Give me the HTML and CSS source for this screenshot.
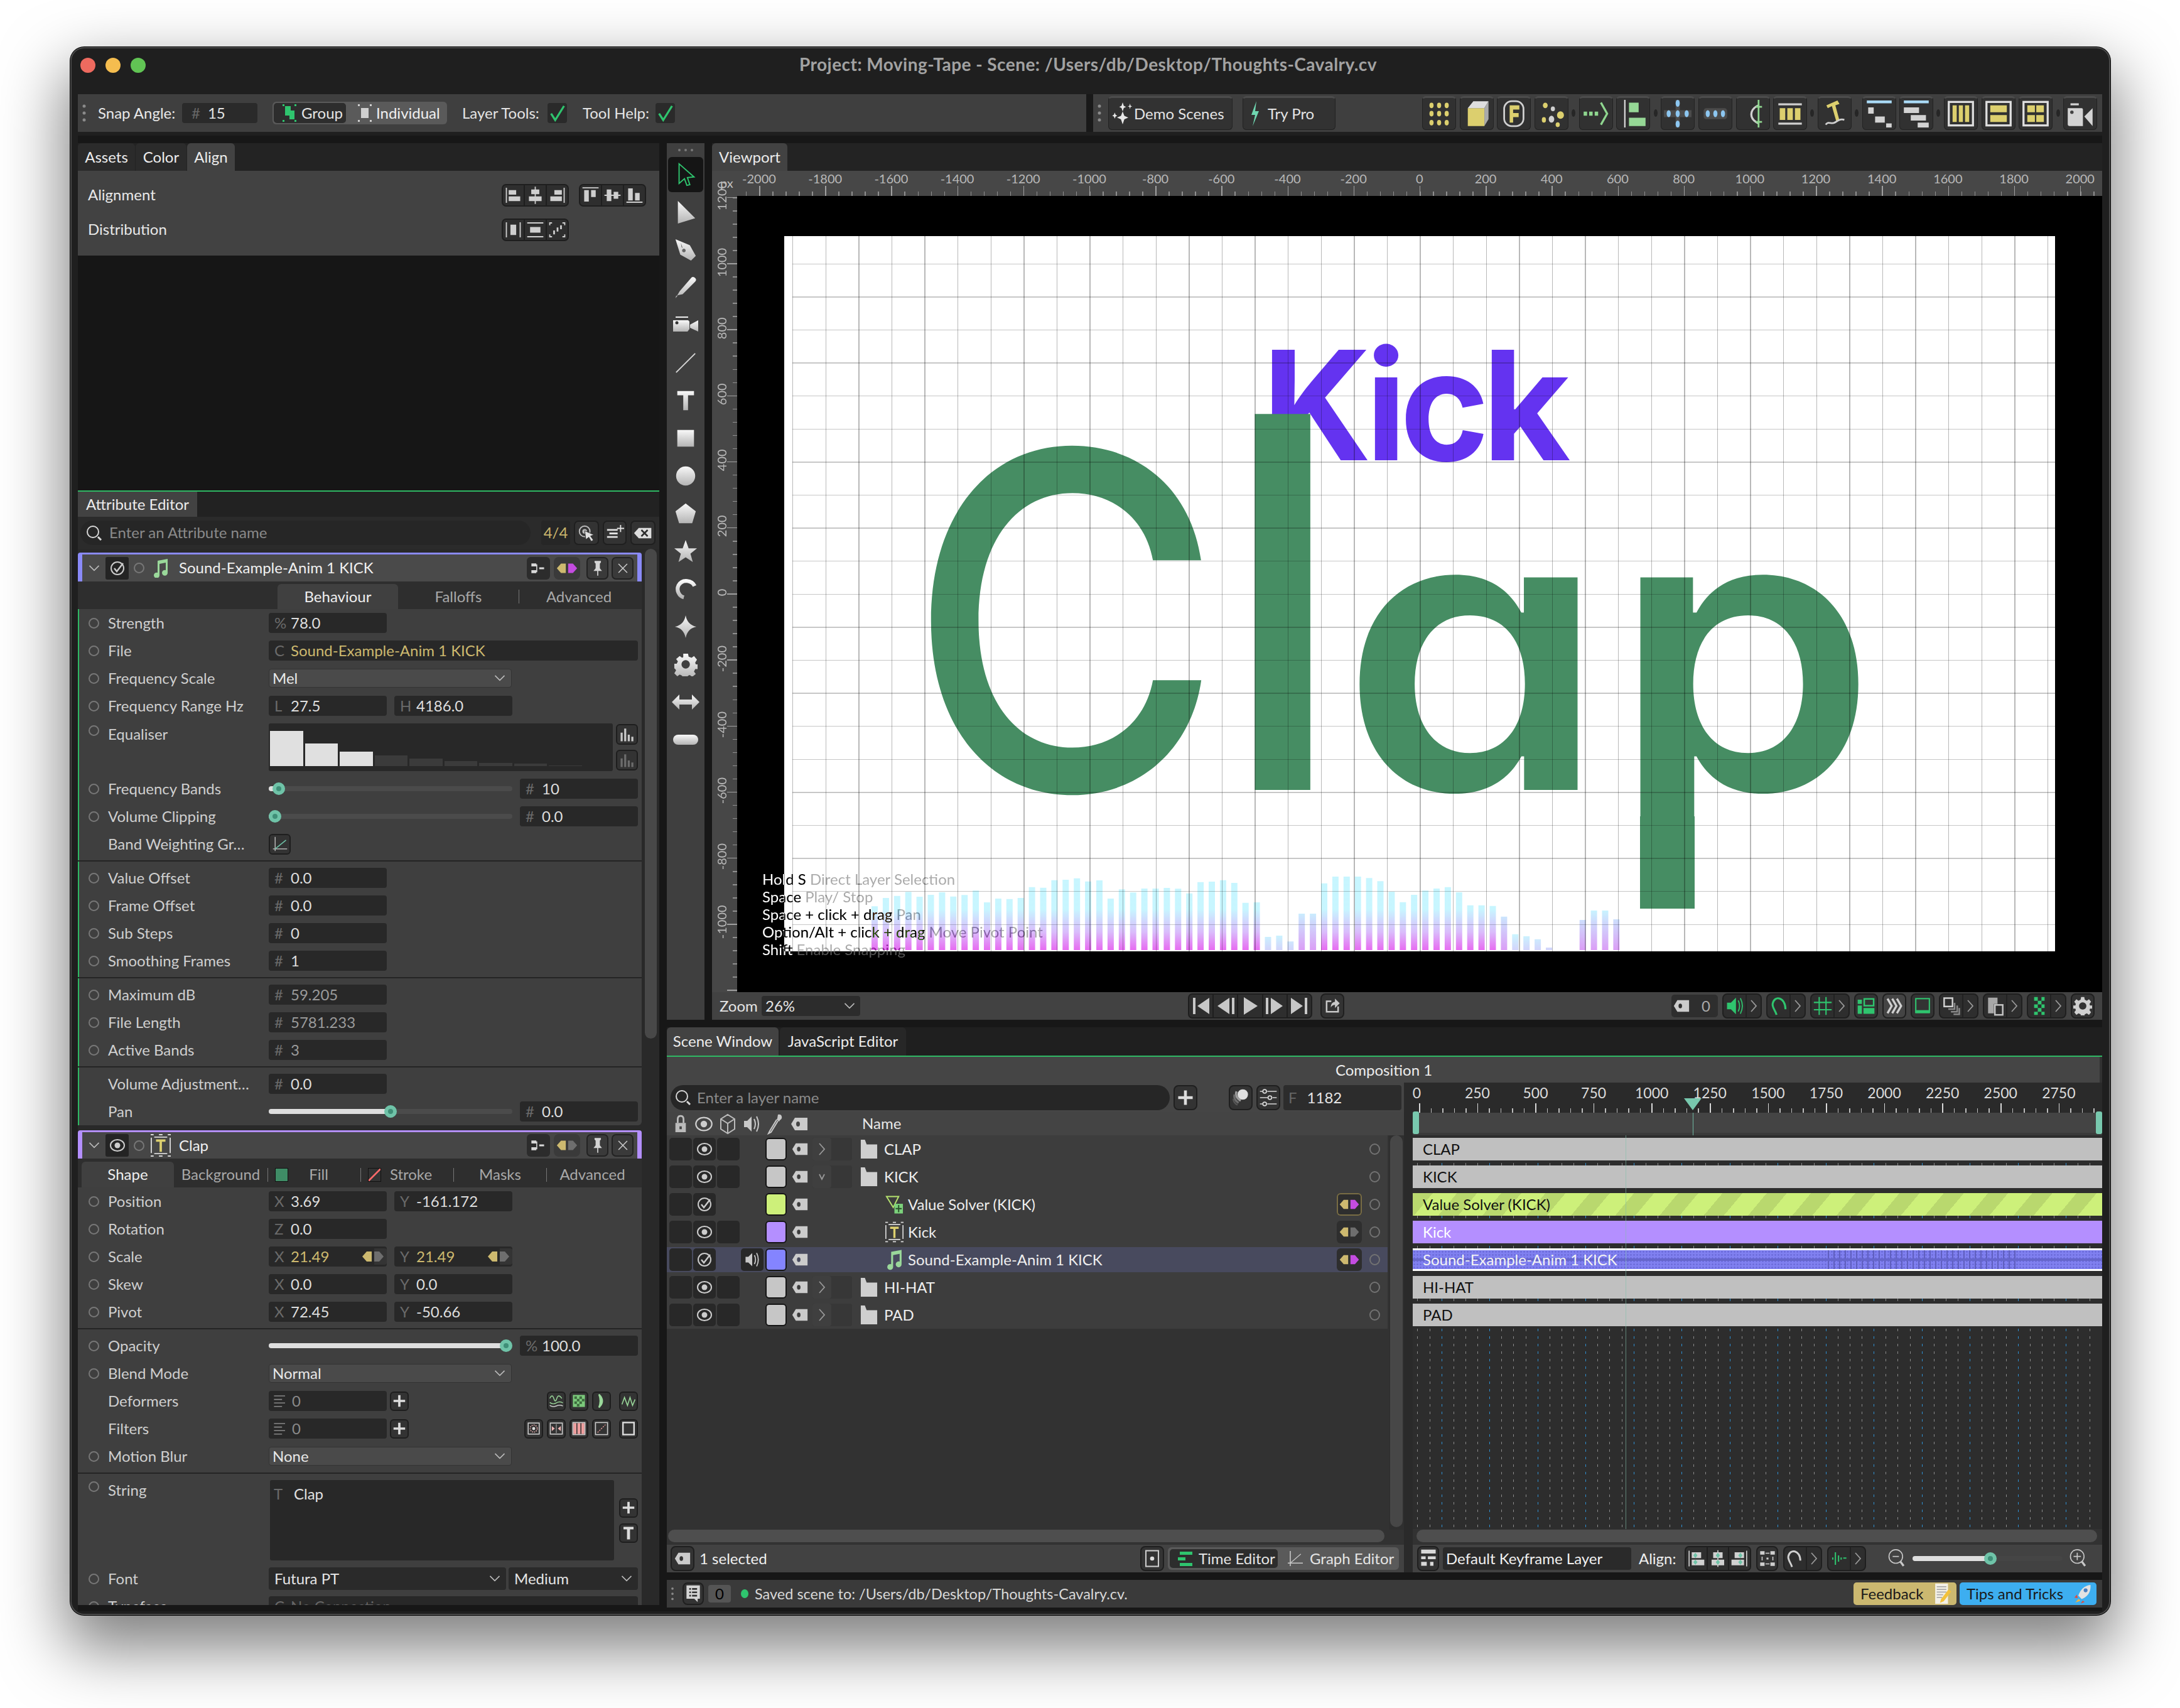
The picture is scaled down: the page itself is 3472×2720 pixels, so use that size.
FILE: index.html
```html
<!DOCTYPE html>
<html lang="en">
<head>
<meta charset="utf-8">
<title>Cavalry</title>
<link rel="stylesheet" href="styles.css">
</head>
<body>
<svg class="sprite" width="0" height="0" aria-hidden="true">
<defs>
<linearGradient id="gw" x1="0" y1="0" x2="0" y2="1"><stop offset="0" stop-color="#f8f8f8"/><stop offset="1" stop-color="#b4b4b4"/></linearGradient>
<symbol id="i-dots" viewBox="0 0 40 40"><g fill="#dccf6e"><ellipse cx="9" cy="8" rx="3" ry="4"/><ellipse cx="20" cy="8" rx="3" ry="4"/><ellipse cx="31" cy="8" rx="3" ry="4"/><ellipse cx="9" cy="20" rx="3" ry="4"/><ellipse cx="20" cy="20" rx="3" ry="4"/><ellipse cx="31" cy="20" rx="3" ry="4"/><ellipse cx="9" cy="33" rx="3" ry="4"/><ellipse cx="20" cy="33" rx="3" ry="4"/><ellipse cx="31" cy="33" rx="3" ry="4"/></g></symbol>
<symbol id="i-box" viewBox="0 0 40 40"><path fill="#dccf6e" d="M7 12h24v26H7z"/><path fill="#dedede" d="M7 12l8-10h22l-6 10z"/><path fill="#aaa" d="M31 12l6-10v26l-6 10z"/></symbol>
<symbol id="i-f" viewBox="0 0 40 40"><rect x="6" y="2" width="28" height="36" rx="11" fill="none" stroke="#cfcfcf" stroke-width="2.5"/><path fill="#dccf6e" d="M14 8h14v6h-9v5h8v6h-8v8h-5z"/></symbol>
<symbol id="i-scatter" viewBox="0 0 40 40"><g><ellipse cx="11" cy="8" rx="3.5" ry="4" fill="#dccf6e"/><ellipse cx="22" cy="13" rx="3" ry="3.5" fill="#cfcfcf"/><ellipse cx="33" cy="22" rx="5" ry="5.5" fill="#dccf6e"/><ellipse cx="20" cy="28" rx="4" ry="5" fill="#cfcfcf"/><ellipse cx="9" cy="29" rx="3" ry="4" fill="#dccf6e"/><ellipse cx="29" cy="36" rx="3" ry="3.5" fill="#dccf6e"/></g></symbol>
<symbol id="i-arrow" viewBox="0 0 40 40"><path fill="#8fd68f" d="M2 17h5v6H2zm8 0h5v6h-5zm8 0h5v6h-5z"/><path fill="none" stroke="#8fd68f" stroke-width="3" d="M27 4l9 16-9 16"/></symbol>
<symbol id="i-alignv" viewBox="0 0 40 40"><path fill="#ddd" d="M7 0h2v40H7z"/><path fill="#96d896" d="M14 6h14v14H14zM14 28h24v12H14z" transform="translate(0 -2)"/></symbol>
<symbol id="i-cross" viewBox="0 0 40 40"><path fill="#4b4b4b" d="M17 0h6v15h17v10H23v15h-6V25H0V15h17z"/><g fill="#8cc6f0"><ellipse cx="20" cy="5" rx="3" ry="5"/><ellipse cx="20" cy="35" rx="3" ry="5"/><ellipse cx="7" cy="20" rx="3" ry="5"/><ellipse cx="20" cy="20" rx="3" ry="5"/><ellipse cx="33" cy="20" rx="3" ry="5"/></g></symbol>
<symbol id="i-row3" viewBox="0 0 40 40"><rect x="3" y="12" width="34" height="16" rx="4" fill="#4b4b4b"/><g fill="#8cc6f0"><ellipse cx="9" cy="20" rx="3" ry="5"/><ellipse cx="20" cy="20" rx="3" ry="5"/><ellipse cx="31" cy="20" rx="3" ry="5"/></g></symbol>
<symbol id="i-bracket" viewBox="0 0 40 40"><path fill="none" stroke="#cfcfcf" stroke-width="3" d="M28 8C14 14 14 28 28 34"/><path fill="none" stroke="#8fd68f" stroke-width="2.5" d="M28 0v40M24 10h9M24 32h9"/></symbol>
<symbol id="i-bars" viewBox="0 0 40 40"><path fill="#cfcfcf" d="M3 5h34v3H3zM3 33h34v3H3z"/><path fill="#dccf6e" d="M5 12h8v17H5zM16 12h8v17h-8zM27 12h8v17h-8z"/></symbol>
<symbol id="i-hammer" viewBox="0 0 40 40"><path fill="#dccf6e" d="M8 8l16-7 3 5-6 2 6 22h-5l-6-21-6 3z"/><path fill="none" stroke="#cfcfcf" stroke-width="2.5" d="M7 36c4-6 8 0 13-3s8-6 14-4"/></symbol>
<symbol id="i-stair1" viewBox="0 0 40 40"><path fill="#a8d8f4" d="M2 1h36v4H2z"/><path fill="#d2d2d2" d="M4 11h8v9H4zM14 24h14v9H14zM30 34h8v6h-8z"/></symbol>
<symbol id="i-stair2" viewBox="0 0 40 40"><path fill="#a8d8f4" d="M2 1h36v4H2z"/><path fill="#d2d2d2" d="M4 11h22v8H4zM14 22h22v8H14zM24 33h16v7H24z" transform="translate(-2)"/></symbol>
<symbol id="i-col3" viewBox="0 0 40 40"><rect x="2.5" y="3" width="35" height="34" fill="none" stroke="#dedede" stroke-width="3"/><path fill="#dccf6e" d="M8 8h6v24H8zM17 8h6v24h-6zM26 8h6v24h-6z"/></symbol>
<symbol id="i-row2" viewBox="0 0 40 40"><rect x="2.5" y="3" width="35" height="34" fill="none" stroke="#dedede" stroke-width="3"/><path fill="#dccf6e" d="M8 8h24v10H8zM8 22h24v10H8z"/></symbol>
<symbol id="i-quad" viewBox="0 0 40 40"><rect x="2.5" y="3" width="35" height="34" fill="none" stroke="#dedede" stroke-width="3"/><path fill="#dccf6e" d="M8 8h11v10H8zM21 8h11v10H21zM8 22h11v10H8zM21 22h11v10H21z"/></symbol>
<symbol id="i-cam" viewBox="0 0 40 40"><path fill="#d4d4d4" d="M2 12h20q2 0 2 2v24H5q-3 0-3-3zM26 24l12-12v26z"/><path fill="#d4d4d4" d="M6 5h12v3H6z"/><circle cx="8" cy="18" r="2.5" fill="#444"/></symbol>
<symbol id="i-sparkle" viewBox="0 0 40 40"><path fill="#e8e8e8" d="M20 0l2 6 4 2-4 2-2 6-2-6-4-2 4-2zM33 2l1 4 3 1-3 1-1 4-1-4-3-1 3-1zM20 16l3 8 7 3-7 3-3 9-3-9-7-3 7-3zM6 18l1.500 4 3 1.500-3 1.500-1.500 4-1.500-4-3-1.500 3-1.500z"/></symbol>
<symbol id="i-bolt" viewBox="0 0 24 40"><path fill="#6fd6b0" d="M14 0L6 22h6l-4 18 10-24h-6z"/></symbol>
<symbol id="i-chk" viewBox="0 0 32 32"><path fill="none" stroke="#2fc46e" stroke-width="3.500" d="M5 17l7 11L27 4"/></symbol>
<symbol id="i-grip" viewBox="0 0 8 32"><g fill="#8a8a8a"><circle cx="4" cy="5" r="2.500"/><circle cx="4" cy="16" r="2.500"/><circle cx="4" cy="27" r="2.500"/></g></symbol>
<symbol id="i-group" viewBox="0 0 24 28"><path fill="#2fc46e" d="M1 0h3v3H1zM20 0h3v3h-3zM1 25h3v3H1zM20 25h3v3h-3zM5 3h9v15H5zM12 10h8v14h-8z"/></symbol>
<symbol id="i-indiv" viewBox="0 0 24 28"><path fill="#d0d0d0" d="M1 0h3v3H1zM20 0h3v3h-3zM1 25h3v3H1zM20 25h3v3h-3zM6 6h12v16H6z"/></symbol>
<symbol id="i-al1" viewBox="0 0 36 34"><path fill="#cfcfcf" d="M5 4h2v26H5zM10 8h13v8H10zM10 19h20v8H10z"/></symbol>
<symbol id="i-al2" viewBox="0 0 36 34"><path fill="#cfcfcf" d="M17 2h2v30h-2zM11 7h14v8H11zM7 19h22v8H7z"/></symbol>
<symbol id="i-al3" viewBox="0 0 36 34"><path fill="#cfcfcf" d="M29 4h2v26h-2zM13 8h13v8H13zM6 19h20v8H6z"/></symbol>
<symbol id="i-al4" viewBox="0 0 36 34"><path fill="#cfcfcf" d="M4 3h28v2H4zM7 8h8v20H7zM19 8h8v12h-8z"/></symbol>
<symbol id="i-al5" viewBox="0 0 36 34"><path fill="#cfcfcf" d="M4 16h28v2H4zM8 7h8v20H8zM20 11h8v12h-8z"/></symbol>
<symbol id="i-al6" viewBox="0 0 36 34"><path fill="#cfcfcf" d="M4 28h28v2H4zM7 5h8v21H7zM19 13h8v13h-8z"/></symbol>
<symbol id="i-ds1" viewBox="0 0 36 34"><path fill="#cfcfcf" d="M5 4h2v26H5zM29 4h2v26h-2zM13 8h10v18H13z"/></symbol>
<symbol id="i-ds2" viewBox="0 0 36 34"><path fill="#cfcfcf" d="M4 4h28v2H4zM4 28h28v2H4zM9 12h18v10H9z"/></symbol>
<symbol id="i-ds3" viewBox="0 0 36 34"><path fill="#cfcfcf" d="M4 4h5v2H4zm0 0h2v5H4zM27 4h5v2h-5zm3 0h2v5h-2zM4 28h5v2H4zm0-3h2v5H4zM27 28h5v2h-5zm3-3h2v5h-2zM11 18h3v7h-3zM17 13h3v7h-3zM23 9h3v7h-3z"/></symbol>
<symbol id="i-search" viewBox="0 0 28 28"><circle cx="12" cy="12" r="9" fill="none" stroke="#d8d8d8" stroke-width="2"/><path stroke="#d8d8d8" stroke-width="3" d="M20 20l5 5"/></symbol>
<symbol id="i-target" viewBox="0 0 32 32"><circle cx="13" cy="13" r="9" fill="none" stroke="#bbb" stroke-width="2"/><circle cx="13" cy="13" r="4" fill="#bbb"/><path fill="#e0e0e0" stroke="#2d2d2d" d="M13 12l16 7-6 2 5 7-4 2-4-7-5 4z"/></symbol>
<symbol id="i-addlist" viewBox="0 0 32 32"><path fill="#e0e0e0" d="M3 9h18v3H3zM7 15h14v3H7zM3 21h18v3H3zM25 2h2v5h5v2h-5v5h-2V9h-5V7h5z"/></symbol>
<symbol id="i-clearx" viewBox="0 0 36 26"><path fill="#ddd" d="M10 3h24v20H10L1 13z"/><path stroke="#2d2d2d" stroke-width="3" d="M15 7l12 12m0-12L15 19"/></symbol>
<symbol id="i-chev" viewBox="0 0 24 14"><path fill="none" stroke="#bbb" stroke-width="2" d="M3 2l9 9 9-9"/></symbol>
<symbol id="i-chevr" viewBox="0 0 14 24"><path fill="none" stroke="#999" stroke-width="1.800" d="M3 3l8 9-8 9"/></symbol>
<symbol id="i-chevd" viewBox="0 0 14 24"><path fill="none" stroke="#999" stroke-width="1.800" d="M3 8l4 8 4-8"/></symbol>
<symbol id="i-check" viewBox="0 0 26 26"><circle cx="13" cy="13" r="10" fill="none" stroke="#ccc" stroke-width="2"/><path fill="none" stroke="#ccc" stroke-width="2.500" d="M8 13l4 5 10-13"/></symbol>
<symbol id="i-eye" viewBox="0 0 26 26"><ellipse cx="13" cy="13" rx="11" ry="9" fill="none" stroke="#ccc" stroke-width="2"/><circle cx="13" cy="13" r="4.500" fill="#ccc"/></symbol>
<symbol id="i-note" viewBox="0 0 28 30"><path fill="#9ad89a" d="M9 3l16-3v22a4.500 4.500 0 1 1-3-4V6L12 8v18a4.500 4.500 0 1 1-3-4z"/></symbol>
<symbol id="i-texttype" viewBox="0 0 34 38"><path fill="#d8d8d8" d="M0 0h5v2H0zM14 0h6v2h-6zM29 0h5v2h-5zM0 36h5v2H0zM14 36h6v2h-6zM29 36h5v2h-5zM0 6h2v26H0zM32 6h2v26h-2zM6 4h22v2H6zM6 32h22v2H6z"/><path fill="#dccf6e" d="M9 9h16v4h-6v17h-4V13H9z"/></symbol>
<symbol id="i-hier" viewBox="0 0 36 24"><path fill="#d8d8d8" d="M3 2h10v6H3zM3 16h10v6H3zM19 10h10v4H19zM13 4h2v16h-2z"/></symbol>
<symbol id="i-kfym" viewBox="0 0 40 26"><path fill="#cdb96f" d="M18 5v16h-8l-7-8 7-8z"/><path fill="#c44ce0" d="M22 5v16h8l7-8-7-8z"/></symbol>
<symbol id="i-kfyg" viewBox="0 0 40 26"><path fill="#cdb96f" d="M18 5v16h-8l-7-8 7-8z"/><path fill="#6e6e6e" d="M22 5v16h8l7-8-7-8z"/></symbol>
<symbol id="i-pin" viewBox="0 0 26 30"><path fill="#d4d4d4" d="M7 1h12v3l-2 2v9l4 5H5l4-5V6L7 4zM12 20h2v9h-2z"/></symbol>
<symbol id="i-x" viewBox="0 0 26 26"><path stroke="#ccc" stroke-width="2" d="M4 4l18 18m0-18L4 22"/></symbol>
<symbol id="i-histo" viewBox="0 0 32 32"><path d="M3 12h4v17H3zM10 4h4v25h-4zM17 16h4v13h-4zM24 20h4v9h-4z" fill="#c8c8c8"/></symbol>
<symbol id="i-histod" viewBox="0 0 32 32"><path d="M3 12h4v17H3zM10 4h4v25h-4zM17 16h4v13h-4zM24 20h4v9h-4z" fill="#6c6c6c"/></symbol>
<symbol id="i-graph" viewBox="0 0 30 30"><path stroke="#ccc" stroke-width="1.500" d="M6 2v26M2 24h26"/><path stroke="#6fc3a8" stroke-width="1.800" d="M6 24L26 8"/></symbol>
<symbol id="i-list" viewBox="0 0 30 28"><path fill="#888" d="M3 3h22v2H3zM3 10h16v2H3zM3 17h22v2H3zM3 24h16v2H3z"/></symbol>
<symbol id="i-plus" viewBox="0 0 26 26"><path fill="#ddd" d="M11 3h4v8h8v4h-8v8h-4v-8H3v-4h8z"/></symbol>
<symbol id="i-t" viewBox="0 0 26 30"><path fill="#ddd" d="M3 3h20v5h-7v20h-6V8H3z"/></symbol>
<symbol id="i-d1" viewBox="0 0 30 30"><path fill="none" stroke="#9ad89a" stroke-width="1.800" d="M2 10q5-10 8 0t6 0 10 0M2 18q6 5 13 1t13 0"/><path stroke="#ccc" stroke-width="2" fill="none" d="M2 24q6 4 13 1t13 0"/></symbol>
<symbol id="i-d2" viewBox="0 0 30 30"><path fill="#7bc97b" d="M3 3h24v24H3z"/><path fill="#3d6a3d" d="M6 6h5v5H6zM16 6h5v5h-5zM11 11h5v5h-5zM21 11h5v5h-5zM6 16h5v5H6zM16 16h5v5h-5zM11 21h5v5h-5z"/></symbol>
<symbol id="i-d3" viewBox="0 0 30 30"><path fill="#9ad89a" d="M10 2q13 13 0 26 5-13 0-26z" stroke="#9ad89a" stroke-width="3"/></symbol>
<symbol id="i-d4" viewBox="0 0 30 30"><path fill="none" stroke="#9ad89a" stroke-width="2" d="M2 22l5-14 6 16 5-16 5 16 5-12"/></symbol>
<symbol id="i-f1" viewBox="0 0 30 30"><rect x="4" y="4" width="22" height="22" fill="none" stroke="#ccc" stroke-width="2"/><circle cx="15" cy="15" r="7" fill="none" stroke="#f0b4b4" stroke-width="2" stroke-dasharray="2 2"/><circle cx="15" cy="15" r="3" fill="#ddd"/></symbol>
<symbol id="i-f2" viewBox="0 0 30 30"><rect x="3" y="4" width="24" height="22" fill="none" stroke="#ccc" stroke-width="2"/><path fill="#f0b4b4" d="M6 10l6 5-6 5zM24 10l-6 5 6 5z"/><path stroke="#ddd" d="M15 6v18"/></symbol>
<symbol id="i-f3" viewBox="0 0 30 30"><path fill="#ee9e9e" d="M4 4h6v22H4zM12 4h6v22h-6zM20 4h6v22h-6z"/><rect x="3" y="3" width="24" height="24" fill="none" stroke="#ccc" stroke-width="2"/></symbol>
<symbol id="i-f4" viewBox="0 0 30 30"><rect x="3" y="3" width="24" height="24" fill="none" stroke="#ccc" stroke-width="2"/><path stroke="#ee9e9e" stroke-width="1.500" stroke-dasharray="3 2" d="M7 23L23 7"/></symbol>
<symbol id="i-f5" viewBox="0 0 30 30"><rect x="4" y="3" width="22" height="24" fill="none" stroke="#ddd" stroke-width="3"/></symbol>
<symbol id="t-cursor" viewBox="0 0 40 40"><path fill="none" stroke="#2fc46e" stroke-width="2" d="M9 2l25 22-11 1 4 12-5 1-4-11-9 8z"/></symbol>
<symbol id="t-arrow" viewBox="0 0 40 40"><path fill="url(#gw)" d="M7 1l29 29-29 9z"/></symbol>
<symbol id="t-pen" viewBox="0 0 40 40"><path fill="url(#gw)" d="M3 2l24 10 10 18-8 8-18-10z"/><path fill="#666" d="M13 15l2 2-3-9zM17 18a3 3 0 1 0 .1 0"/></symbol>
<symbol id="t-pencil" viewBox="0 0 40 40"><path fill="url(#gw)" d="M10 26L30 3q3-2 6 1t0 6L15 31l-9 2zM4 34l3-1-4 5z"/></symbol>
<symbol id="t-camera" viewBox="0 0 40 30"><path fill="url(#gw)" d="M0 7h24l2 2v12l-3 4H0zM27 14l13-7v18l-13-6z"/><path fill="#eee" d="M4 1h20v2H4z"/><circle cx="6" cy="11" r="2.500" fill="#333"/></symbol>
<symbol id="t-line" viewBox="0 0 40 40"><path stroke="#d8d8d8" stroke-width="2" d="M4 36L36 4"/></symbol>
<symbol id="t-t" viewBox="0 0 40 40"><path fill="url(#gw)" d="M6 4h28v7H24v25h-8V11H6z"/></symbol>
<symbol id="t-rect" viewBox="0 0 40 40"><path fill="url(#gw)" d="M6 6h28v28H6z"/></symbol>
<symbol id="t-ell" viewBox="0 0 40 40"><circle cx="20" cy="20" r="16" fill="url(#gw)"/></symbol>
<symbol id="t-pent" viewBox="0 0 40 40"><path fill="url(#gw)" d="M20 3l17 13-6 20H9L3 16z"/></symbol>
<symbol id="t-star" viewBox="0 0 40 40"><path fill="url(#gw)" d="M20 1l5 14h14l-11 9 4 14-12-8-12 8 4-14L1 15h14z"/></symbol>
<symbol id="t-arc" viewBox="0 0 40 40"><path fill="none" stroke="url(#gw)" stroke-width="6.500" d="M35 15C31 6 15 2 8 14c-4 8 1 18 9 20"/></symbol>
<symbol id="t-spark" viewBox="0 0 40 40"><path fill="url(#gw)" d="M20 1q3 16 18 19-15 3-18 19-3-16-18-19 15-3 18-19z"/></symbol>
<symbol id="t-gear" viewBox="0 0 40 40"><path fill="url(#gw)" fill-rule="evenodd" d="M16 2h8l1 5 5 2 4-3 5 6-3 5 1 3h3v8h-4l-2 4 3 4-6 5-4-3-3 1-1 4h-8l-1-4-4-2-4 3-5-5 3-5-2-3H1v-8h4l2-4-3-4 6-5 4 3 2-1zM20 13a7 7 0 1 0 .1 0z"/></symbol>
<symbol id="t-dbl" viewBox="0 0 44 28"><path fill="url(#gw)" d="M0 14L12 2v8h20V2l12 12-12 12v-8H12v8z"/></symbol>
<symbol id="t-pill" viewBox="0 0 40 16"><rect width="40" height="16" rx="8" fill="url(#gw)"/></symbol>
<symbol id="b-first" viewBox="0 0 36 36"><path fill="#c8c8c8" d="M5 5h4v26H5zM31 5v26L12 18z"/></symbol>
<symbol id="b-prev" viewBox="0 0 36 36"><path fill="#c8c8c8" d="M24 5v26L5 18zM28 5h4v26h-4z"/></symbol>
<symbol id="b-play" viewBox="0 0 36 36"><path fill="#c8c8c8" d="M8 4l22 14L8 32z"/></symbol>
<symbol id="b-next" viewBox="0 0 36 36"><path fill="#c8c8c8" d="M4 5h4v26H4zM12 5l19 13-19 13z"/></symbol>
<symbol id="b-last" viewBox="0 0 36 36"><path fill="#c8c8c8" d="M5 5l19 13L5 31zM27 5h4v26h-4z"/></symbol>
<symbol id="b-out" viewBox="0 0 36 36"><path fill="none" stroke="#c8c8c8" stroke-width="3" d="M16 9H7v20h22V19"/><path fill="#c8c8c8" d="M15 21q0-10 8-11V4l9 9-9 9v-6q-5 0-8 5z"/></symbol>
<symbol id="i-tag" viewBox="0 0 30 30"><path fill="#cbcbcb" fill-rule="evenodd" d="M8 5h20v20H8L2 15zM10 15a3 4 0 1 0 6 0 3 4 0 1 0-6 0z"/></symbol>
<symbol id="v-sound" viewBox="0 0 32 36"><path fill="#2fc46e" d="M2 12h7l9-9v30l-9-9H2z"/><path fill="none" stroke="#2fc46e" stroke-width="2" d="M22 8q5 10 0 20M26 4q7 14 0 28"/></symbol>
<symbol id="v-curve" viewBox="0 0 32 36"><path fill="none" stroke="#2fc46e" stroke-width="3.500" d="M28 24C28 2 8-2 5 14c-1 7 5 12 7 20"/></symbol>
<symbol id="v-grid" viewBox="0 0 36 36"><path fill="#2fc46e" d="M10 1h2.500v34H10zM23 1h2.500v34H23zM1 10h34v2.500H1zM1 24h34v2.500H1z"/></symbol>
<symbol id="v-layout" viewBox="0 0 36 36"><path fill="#2fc46e" d="M2 6h8v8H2zM2 17h8v16H2zM13 22h21v11H13z"/><rect x="14.500" y="4.500" width="18" height="13" fill="none" stroke="#2fc46e" stroke-width="3"/></symbol>
<symbol id="v-chev" viewBox="0 0 36 36"><path fill="none" stroke="#d0d0d0" stroke-width="4" d="M5 4l8 14-8 14M14 4l8 14-8 14M23 4l8 14-8 14"/></symbol>
<symbol id="v-screen" viewBox="0 0 36 36"><path fill="#2fc46e" d="M4 26h28v6H4z"/><rect x="5" y="4" width="26" height="26" fill="none" stroke="#2fc46e" stroke-width="2.500"/></symbol>
<symbol id="v-layers" viewBox="0 0 36 36"><rect x="4" y="3" width="16" height="16" fill="none" stroke="#d0d0d0" stroke-width="3"/><path fill="none" stroke="#888" stroke-width="3" d="M24 12v12H12M29 17v12H17M33 22v12H22"/></symbol>
<symbol id="v-dev" viewBox="0 0 36 36"><path fill="#a8a8a8" d="M4 2h18v12H15v18H4z"/><rect x="17" y="16" width="15" height="19" fill="none" stroke="#c4c4c4" stroke-width="3"/></symbol>
<symbol id="v-check" viewBox="0 0 36 36"><path fill="#2fc46e" d="M8 1h7v7H8zM22 1h6v7h-6zM15 8h7v7h-7zM8 15h7v7H8zM22 15h6v7h-6zM15 22h7v7h-7zM8 29h7v6H8zM22 29h6v6h-6z"/></symbol>
<symbol id="v-gear" viewBox="0 0 36 36"><path fill="#cfcfcf" fill-rule="evenodd" d="M15 1h6l1 5 4 2 4-3 4 5-3 4 1 3h4v6h-4l-1 3 3 4-4 5-4-3-4 2-1 5h-6l-1-5-4-2-4 3-4-5 3-4-1-3H0v-6h4l1-3-3-4 4-5 4 3 4-2zM18 11a7 7 0 1 0 .1 0z"/></symbol>
<symbol id="c-lock" viewBox="0 0 26 34"><path fill="#bbb" d="M4 15h18v16H4zM11 21h4v5h-4z" fill-rule="evenodd"/><path fill="none" stroke="#bbb" stroke-width="3" d="M8 15V9q0-6 5-6t5 6v6"/></symbol>
<symbol id="c-cube" viewBox="0 0 28 34"><path fill="none" stroke="#bbb" stroke-width="2" d="M14 2l11 7v16l-11 7-11-7V9zM3 9l11 7 11-7M14 16v16"/></symbol>
<symbol id="c-sound" viewBox="0 0 28 34"><path fill="#c8c8c8" d="M2 12h5l7-7v24l-7-7H2z"/><path fill="none" stroke="#c8c8c8" stroke-width="2" d="M18 9q4 8 0 16M22 5q6 12 0 24"/></symbol>
<symbol id="c-drop" viewBox="0 0 28 34"><path fill="#c8c8c8" d="M18 2q5-1 6 3t-3 6l-1 2-4-3 1-2z"/><path fill="none" stroke="#c8c8c8" stroke-width="2" d="M16 10L5 28l-2 4 4-2 11-18"/></symbol>
<symbol id="i-folder" viewBox="0 0 30 34"><path fill="#cfcfcf" d="M1 9V1h7l3 8h18v24H1z"/></symbol>
<symbol id="i-solver" viewBox="0 0 30 34"><path fill="none" stroke="#b6e36f" stroke-width="2" d="M2 4h20l-9 18z"/><path fill="#7bd17b" d="M15 16h14v16H15z"/><path stroke="#2a4d2a" stroke-width="2" d="M22 18v12M17 24h10"/></symbol>
<symbol id="i-onion" viewBox="0 0 36 36"><circle cx="22" cy="12" r="10" fill="#e0e0e0"/><path fill="none" stroke="#9c9c9c" stroke-width="4" d="M10 6q-4 10 8 18"/><path fill="none" stroke="#6c6c6c" stroke-width="4" d="M6 12q-2 10 8 16"/><path fill="none" stroke="#555" stroke-width="3" d="M4 20q0 8 8 12"/></symbol>
<symbol id="i-sliders" viewBox="0 0 36 36"><path stroke="#d8d8d8" stroke-width="2" d="M2 6h5M16 6h18M2 18h15M26 18h8M2 30h5M16 30h18" /><g fill="none" stroke="#d8d8d8" stroke-width="2"><circle cx="11" cy="6" r="3.500"/><circle cx="21" cy="18" r="3.500"/><circle cx="11" cy="30" r="3.500"/></g></symbol>
<symbol id="i-sq" viewBox="0 0 30 36"><rect x="3" y="3" width="24" height="30" fill="none" stroke="#ccc" stroke-width="2.500"/><circle cx="15" cy="18" r="4" fill="#ddd"/></symbol>
<symbol id="i-te" viewBox="0 0 24 24"><path fill="#2fc46e" d="M3 1h20v5H3zM0 10h12v5H0zM3 19h20v5H3z"/></symbol>
<symbol id="i-ge" viewBox="0 0 30 30"><path stroke="#c8c8c8" stroke-width="2" d="M5 0v30M0 24h30"/><path stroke="#c8c8c8" stroke-width="1.500" d="M5 24L26 6"/></symbol>
<symbol id="i-kl" viewBox="0 0 30 36"><path fill="#d8d8d8" d="M2 2h26v7H2zM2 14h8v5H2zM14 14h14v5H14zM2 24h10v7H2zM18 24h6v7h-6z"/></symbol>
<symbol id="a-1" viewBox="0 0 36 34"><path fill="#d0d0d0" d="M4 2h2v30H4zM10 5h18v11H10zM10 19h24v11H10z"/><path fill="#6fc3a8" d="M17 6l4 5-4 5-4-5zM17 19l4 5-4 5-4-5z"/></symbol>
<symbol id="a-2" viewBox="0 0 36 34"><path fill="#d0d0d0" d="M9 5h18v11H9zM6 19h24v11H6zM17 1h2v32h-2z"/><path fill="#6fc3a8" d="M18 6l4 5-4 5-4-5zM18 19l4 5-4 5-4-5z"/></symbol>
<symbol id="a-3" viewBox="0 0 36 34"><path fill="#d0d0d0" d="M30 2h2v30h-2zM8 5h18v11H8zM2 19h24v11H2z"/><path fill="#6fc3a8" d="M19 6l4 5-4 5-4-5zM19 19l4 5-4 5-4-5z"/></symbol>
<symbol id="a-box" viewBox="0 0 36 36"><path fill="#cfcfcf" d="M3 3h9v7H3zM24 3h9v7h-9zM3 26h9v7H3zM24 26h9v7h-9zM14 6h8v2h-8zM14 28h8v2h-8zM6 14h2v8H6zM28 14h2v8h-2zM16 16h4v4h-4z"/></symbol>
<symbol id="a-wave" viewBox="0 0 36 36"><path stroke="#2fc46e" stroke-width="2.500" d="M6 16v4M11 6v24M17 12v12M22 16v4M26 17h6"/></symbol>
<symbol id="a-curve" viewBox="0 0 36 36"><path fill="none" stroke="#d0d0d0" stroke-width="3.500" d="M28 22C28 2 8-2 5 14c-1 7 5 12 7 20"/></symbol>
<symbol id="i-zoomout" viewBox="0 0 36 40"><circle cx="16" cy="16" r="13" fill="none" stroke="#c8c8c8" stroke-width="2"/><path stroke="#c8c8c8" stroke-width="2" d="M10 16h12"/><path stroke="#c8c8c8" stroke-width="4" d="M25 26l6 8"/></symbol>
<symbol id="i-zoomin" viewBox="0 0 36 40"><circle cx="16" cy="16" r="13" fill="none" stroke="#c8c8c8" stroke-width="2"/><path stroke="#c8c8c8" stroke-width="2" d="M9 16h14M16 9v14"/><path stroke="#c8c8c8" stroke-width="4" d="M25 26l6 8"/></symbol>
<symbol id="i-console" viewBox="0 0 30 36"><path fill="#d4d4d4" d="M3 3h24v24h-4v6l-6-6H3z"/><path fill="#333" d="M8 8h3v3H8zM13 8h9v3h-9zM8 14h3v3H8zM13 14h9v3h-9zM8 20h3v3H8zM13 20h9v3h-9z"/></symbol>
<symbol id="i-memo" viewBox="0 0 32 40"><path fill="#f3f0e6" d="M2 1h24v38H2z"/><path fill="#aaa" d="M5 6h18v2H5zM5 11h18v2H5zM5 16h18v2H5zM5 21h12v2H5zM5 26h10v2H5z"/><path fill="#f3c23c" d="M27 12l5 4-14 18-7 3 2-7z"/></symbol>
<symbol id="i-rocket" viewBox="0 0 36 40"><path fill="#e34a3a" d="M6 22l-5 6 7 1zM18 34l-4 6 8-3z"/><path fill="#e2e2e2" d="M34 2C22 3 13 12 9 24l7 7c12-5 19-14 18-29z"/><circle cx="24" cy="13" r="4" fill="#4a7fc0"/><path fill="#f3b33c" d="M9 31l-6 7 9-3 1-2z"/></symbol>
</defs>
</svg>

<div class="win">
  <header class="titlebar">
    <div class="lights"><i class="lr-red"></i><i class="lr-yel"></i><i class="lr-grn"></i></div>
    <div class="wintitle">Project: Moving-Tape - Scene: /Users/db/Desktop/Thoughts-Cavalry.cv</div>
  </header>

  <div class="toolbar">
    <svg class="grip"><use href="#i-grip"/></svg>
    <span class="tb-snap">Snap Angle:</span>
    <div class="tb-field"><b>#</b><span>15</span></div>
    <div class="toggle tb-toggle">
      <div class="tog on tg-group"><svg class="ic24"><use href="#i-group"/></svg>Group</div>
      <div class="tog tg-indiv"><svg class="ic24"><use href="#i-indiv"/></svg>Individual</div>
    </div>
    <span class="tb-layertools">Layer Tools:</span>
    <div class="tb-check"><svg><use href="#i-chk"/></svg></div>
    <span class="tb-toolhelp">Tool Help:</span>
    <div class="tb-check tb-check2"><svg><use href="#i-chk"/></svg></div>
    <div class="tb-sep"></div>
    <svg class="grip grip2"><use href="#i-grip"/></svg>
    <div class="tb-btn tb-demo"><svg class="ic36"><use href="#i-sparkle"/></svg>Demo Scenes</div>
    <div class="tb-btn tb-try"><svg class="ic-bolt"><use href="#i-bolt"/></svg>Try Pro</div>
    <div class="ibs">
      <div class="ib54"><svg><use href="#i-dots"/></svg></div><div class="ib54"><svg><use href="#i-box"/></svg></div><div class="ib54"><svg><use href="#i-f"/></svg></div><div class="ib54"><svg><use href="#i-scatter"/></svg></div>
      <i class="gdot"></i>
      <div class="ib54"><svg><use href="#i-arrow"/></svg></div><div class="ib54"><svg><use href="#i-alignv"/></svg></div>
      <i class="gdot"></i>
      <div class="ib54"><svg><use href="#i-cross"/></svg></div><div class="ib54"><svg><use href="#i-row3"/></svg></div><div class="ib54"><svg><use href="#i-bracket"/></svg></div><div class="ib54"><svg><use href="#i-bars"/></svg></div>
      <i class="gdot"></i>
      <div class="ib54"><svg><use href="#i-hammer"/></svg></div>
      <i class="gdot"></i>
      <div class="ib54"><svg><use href="#i-stair1"/></svg></div><div class="ib54"><svg><use href="#i-stair2"/></svg></div>
      <i class="gdot"></i>
      <div class="ib54"><svg><use href="#i-col3"/></svg></div><div class="ib54"><svg><use href="#i-row2"/></svg></div><div class="ib54"><svg><use href="#i-quad"/></svg></div>
      <i class="gdot"></i>
      <div class="ib54"><svg><use href="#i-cam"/></svg></div>
    </div>
  </div>

  <div class="main">
    <aside class="left">
      <div class="tabs">
        <div class="tab t-assets">Assets</div><div class="tab t-color">Color</div><div class="tab on t-align">Align</div>
      </div>
      <div class="alignbody">
        <div class="alrow"><span>Alignment</span>
          <div class="bgroup"><i><svg><use href="#i-al1"/></svg></i><i><svg><use href="#i-al2"/></svg></i><i><svg><use href="#i-al3"/></svg></i></div>
          <div class="bgroup"><i><svg><use href="#i-al4"/></svg></i><i><svg><use href="#i-al5"/></svg></i><i><svg><use href="#i-al6"/></svg></i></div>
        </div>
        <div class="alrow"><span>Distribution</span>
          <div class="bgroup"><i><svg><use href="#i-ds1"/></svg></i><i><svg><use href="#i-ds2"/></svg></i><i><svg><use href="#i-ds3"/></svg></i></div>
        </div>
      </div>
      <div class="void"></div>
      <section class="attr">
        <div class="attr-tabs"><div class="tab on t-attr">Attribute Editor</div></div>
        <div class="attr-search">
          <div class="search s-attr"><svg class="ic28"><use href="#i-search"/></svg><span>Enter an Attribute name</span></div>
          <div class="count">4/4</div>
          <div class="ib40"><svg><use href="#i-target"/></svg></div>
          <div class="ib40 n38"><svg><use href="#i-addlist"/></svg></div>
          <div class="ib40"><svg><use href="#i-clearx"/></svg></div>
        </div>
        <div class="attr-scroll">
          <div class="attr-layers">

            <div class="lh lh-kick">
              <svg class="lh-chev"><use href="#i-chev"/></svg>
              <div class="lh-vis"><svg><use href="#i-check"/></svg></div>
              <i class="radio lh-radio"></i>
              <svg class="lh-ic"><use href="#i-note"/></svg>
              <span class="lh-name">Sound-Example-Anim 1 KICK</span>
              <div class="lh-hier"><svg><use href="#i-hier"/></svg></div>
              <div class="lh-kf"><svg><use href="#i-kfym"/></svg></div>
              <div class="lh-pin"><svg><use href="#i-pin"/></svg></div>
              <div class="lh-x"><svg><use href="#i-x"/></svg></div>
            </div>
            <div class="subtabs st-kick">
              <div class="st on st-beh">Behaviour</div><div class="st st-fall">Falloffs</div><i class="st-sep"></i><div class="st st-adv">Advanced</div>
            </div>
            <div class="lbody lb-kick">
              <div class="row"><i class="radio"></i><span class="lbl">Strength</span><div class="cc"><div class="fld f1"><b>%</b>78.0</div></div></div>
              <div class="row"><i class="radio"></i><span class="lbl">File</span><div class="cc"><div class="fld f3 gold"><b>C</b>Sound-Example-Anim 1 KICK</div></div></div>
              <div class="row"><i class="radio"></i><span class="lbl">Frequency Scale</span><div class="cc"><div class="select">Mel<svg><use href="#i-chev"/></svg></div></div></div>
              <div class="row"><i class="radio"></i><span class="lbl">Frequency Range Hz</span><div class="cc"><div class="fld f1"><b>L</b>27.5</div><div class="fld f1"><b>H</b>4186.0</div></div></div>
              <div class="row row-eq"><i class="radio"></i><span class="lbl">Equaliser</span>
                <div class="cc cc-eq">
                  <div class="eq"><i class="e1"></i><i class="e2"></i><i class="e3"></i><i class="d1"></i><i class="d2"></i><i class="d3"></i><i class="d4"></i><i class="d5"></i><i class="d6"></i></div>
                  <div class="eq-btns"><div class="ibs35"><svg><use href="#i-histo"/></svg></div><div class="ibs35"><svg><use href="#i-histod"/></svg></div></div>
                </div>
              </div>
              <div class="row"><i class="radio"></i><span class="lbl">Frequency Bands</span><div class="cc"><div class="slider"><i class="fill" style="width:16px"></i><i class="thumb" style="left:6px"></i></div><div class="fld f1"><b>#</b>10</div></div></div>
              <div class="row"><i class="radio"></i><span class="lbl">Volume Clipping</span><div class="cc"><div class="slider"><i class="fill" style="width:10px"></i><i class="thumb" style="left:0"></i></div><div class="fld f1"><b>#</b>0.0</div></div></div>
              <div class="row"><i></i><span class="lbl">Band Weighting Gr…</span><div class="cc"><div class="ibs35"><svg><use href="#i-graph"/></svg></div></div></div>
              <hr>
              <div class="row"><i class="radio"></i><span class="lbl">Value Offset</span><div class="cc"><div class="fld f1"><b>#</b>0.0</div></div></div>
              <div class="row"><i class="radio"></i><span class="lbl">Frame Offset</span><div class="cc"><div class="fld f1"><b>#</b>0.0</div></div></div>
              <div class="row"><i class="radio"></i><span class="lbl">Sub Steps</span><div class="cc"><div class="fld f1"><b>#</b>0</div></div></div>
              <div class="row"><i class="radio"></i><span class="lbl">Smoothing Frames</span><div class="cc"><div class="fld f1"><b>#</b>1</div></div></div>
              <hr>
              <div class="row"><i class="radio"></i><span class="lbl">Maximum dB</span><div class="cc"><div class="fld f1 ro"><b>#</b>59.205</div></div></div>
              <div class="row"><i class="radio"></i><span class="lbl">File Length</span><div class="cc"><div class="fld f1 ro"><b>#</b>5781.233</div></div></div>
              <div class="row"><i class="radio"></i><span class="lbl">Active Bands</span><div class="cc"><div class="fld f1 ro"><b>#</b>3</div></div></div>
              <hr>
              <div class="row"><i></i><span class="lbl">Volume Adjustment…</span><div class="cc"><div class="fld f1"><b>#</b>0.0</div></div></div>
              <div class="row"><i></i><span class="lbl">Pan</span><div class="cc"><div class="slider"><i class="fill" style="width:194px"></i><i class="thumb" style="left:184px"></i></div><div class="fld f1"><b>#</b>0.0</div></div></div>
            </div>

            <div class="lh lh-clap">
              <svg class="lh-chev"><use href="#i-chev"/></svg>
              <div class="lh-vis"><svg><use href="#i-eye"/></svg></div>
              <i class="radio lh-radio"></i>
              <svg class="lh-ic"><use href="#i-texttype"/></svg>
              <span class="lh-name">Clap</span>
              <div class="lh-hier"><svg><use href="#i-hier"/></svg></div>
              <div class="lh-kf"><svg><use href="#i-kfyg"/></svg></div>
              <div class="lh-pin"><svg><use href="#i-pin"/></svg></div>
              <div class="lh-x"><svg><use href="#i-x"/></svg></div>
            </div>
            <div class="subtabs st-clap">
              <div class="st on st-shape">Shape</div><div class="st st-bg">Background</div><i class="st-sep"></i>
              <i class="swatch sw-fill"></i><div class="st st-fill">Fill</div><i class="st-sep"></i>
              <i class="swatch sw-stroke"></i><div class="st st-stroke">Stroke</div><i class="st-sep"></i>
              <div class="st st-masks">Masks</div><i class="st-sep"></i><div class="st st-adv2">Advanced</div>
            </div>
            <div class="lbody">
              <div class="row"><i class="radio"></i><span class="lbl">Position</span><div class="cc"><div class="fld f1"><b>X</b>3.69</div><div class="fld f1"><b>Y</b>-161.172</div></div></div>
              <div class="row"><i class="radio"></i><span class="lbl">Rotation</span><div class="cc"><div class="fld f1"><b>Z</b>0.0</div></div></div>
              <div class="row"><i class="radio"></i><span class="lbl">Scale</span><div class="cc"><div class="fld f1 gold"><b>X</b>21.49<svg class="fkf"><use href="#i-kfyg"/></svg></div><div class="fld f1 gold"><b>Y</b>21.49<svg class="fkf"><use href="#i-kfyg"/></svg></div></div></div>
              <div class="row"><i class="radio"></i><span class="lbl">Skew</span><div class="cc"><div class="fld f1"><b>X</b>0.0</div><div class="fld f1"><b>Y</b>0.0</div></div></div>
              <div class="row"><i class="radio"></i><span class="lbl">Pivot</span><div class="cc"><div class="fld f1"><b>X</b>72.45</div><div class="fld f1"><b>Y</b>-50.66</div></div></div>
              <hr>
              <div class="row"><i class="radio"></i><span class="lbl">Opacity</span><div class="cc"><div class="slider"><i class="fill" style="width:376px"></i><i class="thumb" style="left:368px"></i></div><div class="fld f1"><b>%</b>100.0</div></div></div>
              <div class="row"><i class="radio"></i><span class="lbl">Blend Mode</span><div class="cc"><div class="select">Normal<svg><use href="#i-chev"/></svg></div></div></div>
              <div class="row"><i></i><span class="lbl">Deformers</span><div class="cc cc-fx"><div class="fld f1 dim"><svg class="lst"><use href="#i-list"/></svg>0</div><div class="ibs30 plus"><svg><use href="#i-plus"/></svg></div><div class="fxset"><div class="ibs30"><svg><use href="#i-d1"/></svg></div><div class="ibs30"><svg><use href="#i-d2"/></svg></div><div class="ibs30"><svg><use href="#i-d3"/></svg></div><div class="ibs30 fxlast"><svg><use href="#i-d4"/></svg></div></div></div></div>
              <div class="row"><i></i><span class="lbl">Filters</span><div class="cc cc-fx"><div class="fld f1 dim"><svg class="lst"><use href="#i-list"/></svg>0</div><div class="ibs30 plus"><svg><use href="#i-plus"/></svg></div><div class="fxset"><div class="ibs30"><svg><use href="#i-f1"/></svg></div><div class="ibs30"><svg><use href="#i-f2"/></svg></div><div class="ibs30"><svg><use href="#i-f3"/></svg></div><div class="ibs30"><svg><use href="#i-f4"/></svg></div><div class="ibs30 fxlast"><svg><use href="#i-f5"/></svg></div></div></div></div>
              <div class="row"><i class="radio"></i><span class="lbl">Motion Blur</span><div class="cc"><div class="select">None<svg><use href="#i-chev"/></svg></div></div></div>
              <hr>
              <div class="row row-str"><i class="radio"></i><span class="lbl">String</span>
                <div class="cc cc-str">
                  <div class="txta"><b>T</b>Clap</div>
                  <div class="str-btns"><div class="ibs30"><svg><use href="#i-plus"/></svg></div><div class="ibs30"><svg><use href="#i-t"/></svg></div></div>
                </div>
              </div>
              <div class="row"><i class="radio"></i><span class="lbl">Font</span><div class="cc cc-font"><div class="dd dd-fam">Futura PT<svg><use href="#i-chev"/></svg></div><div class="dd dd-wt">Medium<svg><use href="#i-chev"/></svg></div></div></div>
              <div class="row"><i class="radio"></i><span class="lbl">Typeface</span><div class="cc"><div class="fld f3 nc"><b>C</b>No Connection</div></div></div>
            </div>
          </div>
          <div class="attr-sb"><i></i></div>
        </div>
      </section>
    </aside>

    <div class="right">
      <div class="upper">
        <nav class="tools">
          <div class="tools-grip"><i></i><i></i><i></i></div>
          <div class="tool on"><svg class="w38"><use href="#t-cursor"/></svg></div>
          <div class="tool"><svg class="w40"><use href="#t-arrow"/></svg></div>
          <div class="tool"><svg class="w40"><use href="#t-pen"/></svg></div>
          <div class="tool"><svg class="w40"><use href="#t-pencil"/></svg></div>
          <div class="tool"><svg class="w40h"><use href="#t-camera"/></svg></div>
          <div class="tool"><svg class="w40"><use href="#t-line"/></svg></div>
          <div class="tool"><svg class="w40"><use href="#t-t"/></svg></div>
          <div class="tool"><svg class="w40"><use href="#t-rect"/></svg></div>
          <div class="tool"><svg class="w40"><use href="#t-ell"/></svg></div>
          <div class="tool"><svg class="w40"><use href="#t-pent"/></svg></div>
          <div class="tool"><svg class="w40"><use href="#t-star"/></svg></div>
          <div class="tool"><svg class="w40"><use href="#t-arc"/></svg></div>
          <div class="tool"><svg class="w40"><use href="#t-spark"/></svg></div>
          <div class="tool"><svg class="w40"><use href="#t-gear"/></svg></div>
          <div class="tool"><svg class="w44"><use href="#t-dbl"/></svg></div>
          <div class="tool"><svg class="w40p"><use href="#t-pill"/></svg></div>
        </nav>
        <section class="viewport">
          <div class="tabs tabs-vp"><div class="tab on t-vp">Viewport</div></div>
          <div class="hruler">
            <span class="px">px</span>
            <div class="hlabels"><span>-2000</span><span>-1800</span><span>-1600</span><span>-1400</span><span>-1200</span><span>-1000</span><span>-800</span><span>-600</span><span>-400</span><span>-200</span><span>0</span><span>200</span><span>400</span><span>600</span><span>800</span><span>1000</span><span>1200</span><span>1400</span><span>1600</span><span>1800</span><span>2000</span></div>
            <div class="hticks"></div>
          </div>
          <div class="stage">
            <div class="vruler">
              <div class="vlabels"><span>1200</span><span>1000</span><span>800</span><span>600</span><span>400</span><span>200</span><span>0</span><span>-200</span><span>-400</span><span>-600</span><span>-800</span><span>-1000</span></div>
              <div class="vticks"></div>
            </div>
            <div class="canvas">
              <div class="comp">
                <div class="kick">Kick</div>
                <div class="clap"><span class="cl-c">C</span><span class="cl-l">l</span><span class="cl-a">a</span><span class="cl-p">p</span></div>
                <svg class="viz" width="2024" height="1139" viewBox="0 0 2024 1139"><defs>
                <linearGradient id="vg" gradientUnits="userSpaceOnUse" x1="0" y1="1072" x2="0" y2="1137"><stop offset="0" stop-color="#c3f5ff"/><stop offset=".55" stop-color="#d6b8fb"/><stop offset="1" stop-color="#e55ff0"/></linearGradient>
                <linearGradient id="vm" gradientUnits="userSpaceOnUse" x1="0" y1="1072" x2="0" y2="1137"><stop offset="0" stop-color="#c3f5ff"/><stop offset="1" stop-color="#d895f5"/></linearGradient>
                <linearGradient id="vs" gradientUnits="userSpaceOnUse" x1="0" y1="1112" x2="0" y2="1137"><stop offset="0" stop-color="#c6f5ff"/><stop offset="1" stop-color="#cfd0fb"/></linearGradient>
                </defs>
                <path fill="url(#vg)" fill-opacity=".92" d="M139 1137v-69.700h10v69.700zM156.900 1137v-83h10v83zM174.800 1137v-86.300h10v86.300zM192.700 1137v-92.700h10v92.700zM210.600 1137v-85h10v85zM228.500 1137v-88h10v88zM246.400 1137v-92h10v92zM264.300 1137v-85.300h10v85.300zM282.200 1137v-87.700h10v87.700zM300.100 1137v-94.700h10v94.700zM318 1137v-76h10v76zM335.900 1137v-82h10v82zM353.800 1137v-81.300h10v81.300zM371.700 1137v-83h10v83zM389.600 1137v-100.300h10v100.300zM407.500 1137v-99.300h10v99.300zM425.400 1137v-111.300h10v111.300zM443.300 1137v-112h10v112zM461.200 1137v-114.300h10v114.300zM479.100 1137v-109.300h10v109.300zM497 1137v-111h10v111zM514.900 1137v-82h10v82zM532.800 1137v-96.700h10v96.700zM550.700 1137v-91.700h10v91.700zM568.600 1137v-98h10v98zM586.500 1137v-98h10v98zM604.400 1137v-99h10v99zM622.300 1137v-97.700h10v97.700zM640.200 1137v-90.300h10v90.300zM658.100 1137v-108.300h10v108.300zM676 1137v-109h10v109zM693.900 1137v-111.300h10v111.300zM711.800 1137v-107h10v107zM729.700 1137v-75.300h10v75.300zM747.600 1137v-76h10v76zM855 1137v-106.300h10v106.300zM872.900 1137v-117h10v117zM890.800 1137v-117h10v117zM908.700 1137v-117h10v117zM926.600 1137v-114.700h10v114.700zM944.500 1137v-109.700h10v109.700zM962.400 1137v-93h10v93zM980.300 1137v-76.300h10v76.300zM998.200 1137v-88h10v88zM1016.100 1137v-94.700h10v94.700zM1034 1137v-98h10v98zM1051.900 1137v-100.300h10v100.300zM1069.800 1137v-92h10v92zM1087.700 1137v-71.300h10v71.300zM1105.600 1137v-71.300h10v71.300zM1123.500 1137v-70.300h10v70.300z"/>
                <path fill="url(#vm)" fill-opacity=".92" d="M819.200 1137v-58h10v58zM837.100 1137v-58h10v58zM1141.400 1137v-53.300h10v53.300zM1266.700 1137v-48h10v48zM1284.600 1137v-63h10v63zM1302.500 1137v-63h10v63zM1320.400 1137v-49h10v49z"/>
                <path fill="url(#vs)" fill-opacity=".92" d="M765.500 1137v-21h10v21zM783.400 1137v-23h10v23zM801.300 1137v-13.700h10v13.700zM1159.300 1137v-25.300h10v25.300zM1177.200 1137v-22h10v22zM1195.100 1137v-17.300h10v17.300zM1213 1137v-4h10v4z"/></svg>
                <div class="gridlines"></div>
              </div>
              <div class="help">
                <div>Hold S <em>Direct Layer Selection</em></div>
                <div>Space <em>Play/ Stop</em></div>
                <div>Space + click + drag <em>Pan</em></div>
                <div>Option/Alt + click + drag <em>Move Pivot Point</em></div>
                <div>Shift <em>Enable Snapping</em></div>
              </div>
            </div>
          </div>
          <div class="vpbar">
            <span class="zm">Zoom</span>
            <div class="zmsel">26%<svg><use href="#i-chev"/></svg></div>
            <div class="bgroup bg-trans"><i><svg><use href="#b-first"/></svg></i><i><svg><use href="#b-prev"/></svg></i><i><svg><use href="#b-play"/></svg></i><i><svg><use href="#b-next"/></svg></i><i><svg><use href="#b-last"/></svg></i></div>
            <div class="ib38 tr-out"><svg><use href="#b-out"/></svg></div>
            <div class="vp-tag"><svg><use href="#i-tag"/></svg><span>0</span></div>
            <div class="vpg"><i><svg><use href="#v-sound"/></svg></i><u><svg><use href="#i-chevr"/></svg></u></div>
            <div class="vpg"><i><svg><use href="#v-curve"/></svg></i><u><svg><use href="#i-chevr"/></svg></u></div>
            <div class="vpg"><i><svg><use href="#v-grid"/></svg></i><u><svg><use href="#i-chevr"/></svg></u></div>
            <div class="ib38"><svg><use href="#v-layout"/></svg></div>
            <div class="ib38 lt"><svg><use href="#v-chev"/></svg></div>
            <div class="ib38"><svg><use href="#v-screen"/></svg></div>
            <div class="vpg"><i><svg><use href="#v-layers"/></svg></i><u><svg><use href="#i-chevr"/></svg></u></div>
            <div class="vpg"><i><svg><use href="#v-dev"/></svg></i><u><svg><use href="#i-chevr"/></svg></u></div>
            <div class="vpg"><i><svg><use href="#v-check"/></svg></i><u><svg><use href="#i-chevr"/></svg></u></div>
            <div class="ib38"><svg><use href="#v-gear"/></svg></div>
          </div>
        </section>
      </div>

      <section class="scene">
        <div class="tabs tabs-sc"><div class="tab on t-sw">Scene Window</div><div class="tab t-js">JavaScript Editor</div></div>
        <div class="comprow">Composition 1</div>
        <div class="split">
          <div class="lst-col">
            <div class="lsearch">
              <div class="search s-layer"><svg class="ic28"><use href="#i-search"/></svg><span>Enter a layer name</span></div>
              <div class="ib38 ic-plus"><svg><use href="#i-plus"/></svg></div>
              <div class="ib38 ic-on"><svg><use href="#i-onion"/></svg></div>
              <div class="ib38"><svg><use href="#i-sliders"/></svg></div>
              <div class="frame"><b>F</b>1182</div>
            </div>
            <div class="lhead">
              <svg class="hi hi1"><use href="#c-lock"/></svg><svg class="hi"><use href="#i-eye"/></svg><svg class="hi"><use href="#c-cube"/></svg><svg class="hi"><use href="#c-sound"/></svg><svg class="hi"><use href="#c-drop"/></svg><svg class="hi"><use href="#i-tag"/></svg>
              <span class="nm">Name</span>
            </div>
            <div class="lwrap">
              <div class="lrows">
                <div class="lr"><i class="cell"></i><i class="cell"><svg><use href="#i-eye"/></svg></i><i class="cell"></i><i class="cell none"></i><i class="sw sw-g"></i><svg class="tag"><use href="#i-tag"/></svg><span class="ex"><i><svg><use href="#i-chevr"/></svg></i></span><svg class="fo"><use href="#i-folder"/></svg><span class="ln">CLAP</span><i class="radio rr"></i></div>
                <div class="lr"><i class="cell"></i><i class="cell"><svg><use href="#i-eye"/></svg></i><i class="cell"></i><i class="cell none"></i><i class="sw sw-g"></i><svg class="tag"><use href="#i-tag"/></svg><span class="ex"><i><svg><use href="#i-chevd"/></svg></i></span><svg class="fo"><use href="#i-folder"/></svg><span class="ln">KICK</span><i class="radio rr"></i></div>
                <div class="lr"><i class="cell"></i><i class="cell"><svg><use href="#i-check"/></svg></i><i class="cell none"></i><i class="cell none"></i><i class="sw sw-lime"></i><svg class="tag"><use href="#i-tag"/></svg><svg class="ch"><use href="#i-solver"/></svg><span class="ln ln2">Value Solver (KICK)</span><div class="kfs kfs-on"><svg><use href="#i-kfym"/></svg></div><i class="radio rr r2"></i></div>
                <div class="lr"><i class="cell"></i><i class="cell"><svg><use href="#i-eye"/></svg></i><i class="cell"></i><i class="cell none"></i><i class="sw sw-pur"></i><svg class="tag"><use href="#i-tag"/></svg><svg class="ch"><use href="#i-texttype"/></svg><span class="ln ln2">Kick</span><div class="kfs"><svg><use href="#i-kfyg"/></svg></div><i class="radio rr r2"></i></div>
                <div class="lr lr-sel"><i class="cell"></i><i class="cell"><svg><use href="#i-check"/></svg></i><i class="cell none"></i><i class="cell"><svg><use href="#c-sound"/></svg></i><i class="sw sw-blu"></i><svg class="tag"><use href="#i-tag"/></svg><svg class="ch"><use href="#i-note"/></svg><span class="ln ln2">Sound-Example-Anim 1 KICK</span><div class="kfs"><svg><use href="#i-kfym"/></svg></div><i class="radio rr r2"></i></div>
                <div class="lr"><i class="cell"></i><i class="cell"><svg><use href="#i-eye"/></svg></i><i class="cell"></i><i class="cell none"></i><i class="sw sw-g"></i><svg class="tag"><use href="#i-tag"/></svg><span class="ex"><i><svg><use href="#i-chevr"/></svg></i></span><svg class="fo"><use href="#i-folder"/></svg><span class="ln">HI-HAT</span><i class="radio rr"></i></div>
                <div class="lr"><i class="cell"></i><i class="cell"><svg><use href="#i-eye"/></svg></i><i class="cell"></i><i class="cell none"></i><i class="sw sw-g"></i><svg class="tag"><use href="#i-tag"/></svg><span class="ex"><i><svg><use href="#i-chevr"/></svg></i></span><svg class="fo"><use href="#i-folder"/></svg><span class="ln">PAD</span><i class="radio rr"></i></div>
              </div>
              <div class="vsb"><i></i></div>
            </div>
            <div class="hsb hsb-l"><i></i></div>
            <div class="bbar bbar-l">
              <div class="ib38 bb-tag"><svg><use href="#i-tag"/></svg></div>
              <span class="sel1">1 selected</span>
              <div class="ib38 bb-sq"><svg><use href="#i-sq"/></svg></div>
              <div class="toggle bb-toggle">
                <div class="tog on tg-time"><svg class="ic24"><use href="#i-te"/></svg>Time Editor</div>
                <div class="tog tg-graph"><svg class="ic24"><use href="#i-ge"/></svg>Graph Editor</div>
              </div>
            </div>
          </div>
          <div class="divider"></div>
          <div class="tl-col">
            <div class="tl-ruler">
              <div class="tl-labels"><span>0</span><span>250</span><span>500</span><span>750</span><span>1000</span><span>1250</span><span>1500</span><span>1750</span><span>2000</span><span>2250</span><span>2500</span><span>2750</span></div>
              <div class="tl-ticks"></div>
              <i class="playhead"></i>
            </div>
            <div class="tl-range"><i class="h1"></i><i class="h2"></i><i class="phline"></i></div>
            <div class="tracks">
              <div class="trk tk-g">CLAP</div>
              <div class="trk tk-g">KICK</div>
              <div class="trk tk-lime">Value Solver (KICK)</div>
              <div class="trk tk-pur">Kick</div>
              <div class="trk tk-snd"><span>Sound-Example-Anim 1 KICK</span></div>
              <div class="trk tk-g">HI-HAT</div>
              <div class="trk tk-g">PAD</div>
              <i class="tl-line"></i>
            </div>
            <div class="hsb hsb-r"><i></i></div>
            <div class="bbar bbar-r">
              <div class="ib34"><svg><use href="#i-kl"/></svg></div>
              <div class="kl-field">Default Keyframe Layer</div>
              <span class="al-lbl">Align:</span>
              <div class="bgroup bg-al"><i><svg><use href="#a-1"/></svg></i><i><svg><use href="#a-2"/></svg></i><i><svg><use href="#a-3"/></svg></i></div>
              <div class="ib34 ab"><svg><use href="#a-box"/></svg></div>
              <div class="vpg vpg-s"><i><svg><use href="#a-curve"/></svg></i><u><svg><use href="#i-chevr"/></svg></u></div>
              <div class="vpg vpg-s"><i><svg><use href="#a-wave"/></svg></i><u><svg><use href="#i-chevr"/></svg></u></div>
              <svg class="zmi zmo"><use href="#i-zoomout"/></svg>
              <div class="slider zslider"><i class="fill" style="width:124px"></i><i class="thumb" style="left:114px"></i></div>
              <svg class="zmi zmp"><use href="#i-zoomin"/></svg>
            </div>
          </div>
        </div>
      </section>

      <footer class="status">
        <svg class="grip grip3"><use href="#i-grip"/></svg>
        <div class="ib34 st-con"><svg><use href="#i-console"/></svg></div>
        <div class="st-zero">0</div>
        <i class="st-dot"></i>
        <span class="st-msg">Saved scene to: /Users/db/Desktop/Thoughts-Cavalry.cv.</span>
        <div class="pill pill-fb">Feedback<svg><use href="#i-memo"/></svg></div>
        <div class="pill pill-tip">Tips and Tricks<svg><use href="#i-rocket"/></svg></div>
      </footer>
    </div>
  </div>
</div>
</body>
</html>
```
FILE: styles.css
```css
*{box-sizing:border-box}
html,body{margin:0;width:3472px;height:2720px;overflow:hidden;background:#fff}
body{padding:75px 0 0 112px;font:24px/1.2 Lato,"Liberation Sans",sans-serif;color:#e4e4e4}
.sprite{position:absolute}
i,u,em,b{font-style:normal;text-decoration:none;font-weight:inherit}
svg{display:block;flex:none}

.win{width:3249px;height:2497px;background:#1f1f1f;border-radius:22px;padding:0 13px 0 12px;display:flex;flex-direction:column;overflow:hidden;box-shadow:0 0 0 1px #000,inset 0 0 0 2px #4a4a4a,0 44px 100px 10px rgba(0,0,0,.5)}

.titlebar{height:75px;flex:none;display:flex;align-items:center;position:relative;padding-bottom:17px}
.lights{display:flex;gap:16px;padding-left:4px}
.lights i{width:24px;height:24px;border-radius:50%}
.lr-red{background:#ee6a5f}.lr-yel{background:#f5bd4f}.lr-grn{background:#61c454}
.wintitle{flex:1;text-align:center;font-weight:700;font-size:28px;letter-spacing:.45px;color:#a2a2a2;padding-right:114px;margin-top:-2px}

.toolbar{height:60px;flex:none;background:#3f3f3f;display:flex;align-items:center;white-space:nowrap}
.grip{width:8px;height:32px;margin-left:6px}
.tb-snap{margin-left:18px;width:134px;color:#e8e8e8}
.tb-field{width:120px;height:32px;background:#2a2a2a;border-radius:4px;display:flex;align-items:center;padding-left:15px}
.tb-field b,.fld b,.frame b{color:#666}
.tb-field span{margin-left:12px}
.toggle{background:#5a5a5a;border-radius:6px;display:flex;padding:2px}
.tb-toggle{margin-left:24px;width:278px;height:36px}
.tog{display:flex;align-items:center;border-radius:5px;height:100%}
.tog.on{background:#2d2d2d}
.ic24{width:24px;height:28px}
.tg-group{width:115px;padding-left:13px;gap:7px}
.tg-indiv{padding-left:18px;gap:6px;color:#f0f0f0}
.tb-layertools{margin-left:24px;width:136px}
.tb-check{width:31px;height:32px;background:#2a2a2a;border-radius:4px;display:flex;align-items:center;justify-content:center}
.tb-check svg{width:30px;height:30px}
.tb-toolhelp{margin-left:25px;width:116px}
.tb-sep{width:11px;height:100%;background:#191919;margin-left:655px}
.grip2{margin-left:6px}
.tb-btn{height:54px;background:#323232;border:1px solid #222;border-top:3px solid #4c4c4c;border-radius:6px;display:flex;align-items:center;font-size:24px}
.tb-demo{margin-left:10px;width:198px;padding-left:4px;gap:0}
.ic36{width:36px;height:36px}
.ic-bolt{width:24px;height:40px}
.tb-try{margin-left:16px;width:148px;padding-left:7px;gap:8px}
.ibs{display:flex;align-items:center;margin-left:138px}
.ib54{width:54px;height:54px;background:#313131;border:1px solid #222;border-top:3px solid #4c4c4c;border-radius:6px;display:flex;align-items:center;justify-content:center;margin-right:5.700px}
.ib54 svg{width:46px;height:44px}
.gdot{width:6px;height:12px;background:#262626;border-radius:50%;margin:0 5.500px 0 -.5px}

.main{flex:none;height:2350px;margin-top:6px;background:#171717;display:flex;gap:12px;padding-top:12px}
.left{width:926px;flex:none;height:2328px;display:flex;flex-direction:column;overflow:hidden}
.tabs{display:flex;background:#232323;height:44px;flex:none}
.tab{background:#2b2b2b;border-radius:6px 6px 0 0;display:flex;align-items:center;justify-content:center;color:#ececec;margin-right:1px}
.tab.on{background:#424242}
.t-assets{width:91px}.t-color{width:81px}.t-align{width:76px}
.alignbody{height:135px;flex:none;background:#424242;padding-top:11px}
.alrow{height:55px;display:flex;align-items:center;padding-left:16px;margin-bottom:0;gap:16px}
.alrow span{width:647px;flex:none;color:#e8e8e8;margin-right:-4px}
.bgroup{display:flex;background:#2e2e2e;border:2px solid #1e1e1e;border-radius:7px;height:36px;width:107px;flex:none}
.bgroup i{flex:1;display:flex;align-items:center;justify-content:center;border-right:2px solid #1e1e1e}
.bgroup i:last-child{border-right:0}
.bgroup svg{width:33px;height:32px}
.void{height:374px;flex:none;background:#161616}

.attr{flex:1;min-height:0;background:#232323;border-top:2px solid #2fb864;display:flex;flex-direction:column}
.attr-tabs{height:40px;flex:none;display:flex;background:#222}
.t-attr{width:190px;background:#393939;border-radius:0;margin-top:0}
.attr-search{height:51px;flex:none;display:flex;align-items:flex-start;padding:6px 0 0 4px;background:#2b2b2b}
.search{background:#262626;border-radius:20px;height:39px;display:flex;align-items:center;color:#8a8a8a}
.s-attr{width:717px;padding-left:8px;gap:10px}
.ic28{width:28px;height:28px}
.count{margin-left:17px;width:46px;height:39px;background:#262626;border-radius:4px;color:#c9b36b;display:flex;align-items:center;justify-content:center;font-size:24px}
.ib40{width:40px;height:39px;background:#333;border:2px solid #1f1f1f;border-radius:7px;display:flex;align-items:center;justify-content:center;margin-left:6px}
.ib40 svg{width:30px;height:30px}
.n38{width:38px}
.attr-scroll{flex:1;min-height:0;display:flex;overflow:hidden;background:#292929}
.attr-layers{width:898px;flex:none;padding-top:6px}
.attr-sb{width:19px;margin-left:5px;flex:none}
.attr-sb i{display:block;height:780px;background:#484848;border-radius:10px}

.lh{height:46px;display:flex;align-items:center;background:#4a4a4a;border-top:3px solid;border-left:7px solid;border-right:7px solid;border-radius:4px 4px 0 0;padding-left:0}
.lh-kick{border-color:#8a8af8}
.lh-clap{height:45px;border-color:#b48fff;background:#464646}
.lh-chev{width:20px;height:12px;margin-left:9px}
.lh-vis{width:37px;height:36px;background:#242424;border-radius:3px;margin-left:8px;display:flex;align-items:center;justify-content:center}
.lh-vis svg{width:26px;height:26px}
.radio{width:17px;height:17px;border-radius:50%;border:2px solid #777;flex:none}
.lh-radio{margin-left:8px}
.lh-ic{width:28px;height:30px;margin-left:12px}
.lh-clap .lh-ic{width:32px;height:38px;margin-left:10px}
.lh-name{margin-left:15px;width:554px;white-space:nowrap;font-size:24px;color:#f0f0f0;flex:none}
.lh-clap .lh-name{margin-left:13px}
.lh-hier{width:37px;height:36px;background:#2c2c2c;border-radius:6px;display:flex;align-items:center;justify-content:center}
.lh-hier svg{width:28px;height:22px}
.lh-kf{width:42px;height:36px;margin-left:6px;background:#3a3a3a;border-radius:8px;display:flex;align-items:center;justify-content:center}
.lh-kf svg{width:38px;height:26px}
.lh-pin,.lh-x{width:35px;height:36px;margin-left:10px;background:#3a3a3a;border:2px solid #222;border-radius:7px;display:flex;align-items:center;justify-content:center}
.lh-x{margin-left:5px}
.lh-pin svg{width:22px;height:26px}.lh-x svg{width:20px;height:20px}

.subtabs{display:flex;align-items:flex-end;background:#2e2e2e;color:#a8a8a8;height:44px;position:relative}
.st-clap{height:46px}
.st{display:flex;align-items:center;justify-content:center;height:40px;border-radius:6px 6px 0 0}
.st.on{background:#404040;color:#efefef}
.st-sep{width:1px;height:22px;background:#777;margin-bottom:9px;flex:none}
.st-beh{width:192px;margin-left:318px}
.st-fall{width:192px}
.st-adv{width:190px}
.st-clap .st{height:41px}
.st-shape{width:147px;margin-left:6px}
.st-bg{width:149px}
.st-fill{width:115px;padding-right:18px}
.st-stroke{width:115px;padding-right:20px}
.st-masks{width:147px}
.st-adv2{width:145px}
.swatch{width:21px;height:22px;margin:0 0 9px 11px;flex:none}
.sw-fill{background:#3f8c66;border:1px solid #111}
.sw-stroke{border:1px solid #111;background:linear-gradient(135deg,transparent 46%,#e66 46% 54%,transparent 54%),#333}

.lbody{background:#3f3f3f;color:#d0d0d0;border-radius:0 0 6px 0;margin-bottom:8px}
.lb-kick{box-shadow:inset 2px 0 0 #2fb864}
.lbody hr{height:2px;border:0;margin:4px 0;background:#242424}
.row{height:44px;display:grid;grid-template-columns:48px 256px 1fr;align-items:center}
.row>.radio{margin-left:17px}
.lbl{white-space:nowrap;color:#cfcfcf}
.cc{display:flex;align-items:center;gap:12px;padding-right:6px}
.fld{height:32px;background:#282828;border-radius:4px;display:flex;align-items:center;color:#dedede;position:relative;white-space:nowrap}
.fld b{width:35px;flex:none;padding-left:9px;color:#6a6a6a}
.f1{width:188px;flex:none}.f3{width:588px}
.gold{color:#cdb96f}
.fkf{position:absolute;left:144px;top:3px;width:44px;height:26px;border-radius:0 4px 4px 0;background:linear-gradient(90deg,transparent 55%,#343434 55%)}
.ro{color:#9a9a9a}
.dim{color:#8a8a8a}
.select{width:387px;height:30px;background:#4a4a4a;border:1px solid #333;border-radius:4px;display:flex;align-items:center;justify-content:space-between;padding:0 8px 0 5px;color:#e8e8e8}
.select svg,.dd svg,.zmsel svg{width:20px;height:12px}
.row-eq{height:88px;align-items:start}
.row-eq>.radio,.row-eq>.lbl{margin-top:9px}
.cc-eq{gap:5px;padding-top:6px}
.eq{width:548px;height:76px;background:#282828;display:flex;align-items:flex-end;gap:3px;padding:0 0 8px 2px;border-radius:3px}
.eq i{width:52.500px}
.e1{height:56px;background:#e0e0e0}.e2{height:36px;background:#e0e0e0}.e3{height:23px;background:#e0e0e0}
.d1{height:17px;background:#3b3b3b}.d2{height:12px;background:#3b3b3b}.d3{height:8px;background:#3b3b3b}.d4{height:5px;background:#3b3b3b}.d5{height:4px;background:#3b3b3b}.d6{height:1px;background:#3b3b3b}
.eq-btns{display:flex;flex-direction:column;gap:8px}
.ibs35{width:35px;height:33px;background:#333;border:2px solid #1e1e1e;border-radius:6px;display:flex;align-items:center;justify-content:center}
.ibs35 svg{width:26px;height:26px}
.slider{width:388px;height:8px;background:#4b4b4b;border-radius:4px;position:relative;flex:none}
.slider .fill{display:block;height:100%;background:#dedede;border-radius:4px}
.slider .thumb{position:absolute;top:50%;margin-top:-10px;width:20px;height:20px;border-radius:50%;background:#6fc3a8}
.slider .thumb::after{content:"";position:absolute;left:6px;top:6px;width:8px;height:8px;border-radius:50%;background:#3f8f78}
.cc-fx{gap:5px}
.lst{width:24px;height:24px;margin:0 7px 0 6px}
.ibs30{width:30px;height:31px;background:#333;border:2px solid #1e1e1e;border-radius:6px;display:flex;align-items:center;justify-content:center;flex:none}
.ibs30 svg{width:24px;height:24px}
.fxset{margin-left:auto;display:flex;gap:6px;position:relative}
.fxlast{margin-left:7px}
.row-str{height:141px;align-items:start}
.row-str>.radio,.row-str>.lbl{margin-top:8px}
.cc-str{gap:8px;padding-top:6px;padding-left:2px}
.txta{width:548px;height:128px;background:#282828;border-radius:3px;padding:8px 0 0 38px;position:relative;color:#e0e0e0}
.txta b{position:absolute;left:6px;color:#6a6a6a}
.str-btns{display:flex;flex-direction:column;gap:9px}
.cc-font{gap:4px}
.dd{height:36px;background:#2a2a2a;border-radius:4px;display:flex;align-items:center;justify-content:space-between;padding:0 8px 0 9px;color:#e4e4e4}
.dd-fam{width:378px}.dd-wt{width:206px}
.nc{color:#666}

.right{width:2286px;flex:none;display:flex;flex-direction:column}
.upper{height:1396px;flex:none;display:flex;gap:12px}
.tools{width:60px;flex:none;background:#3f3f3f;display:flex;flex-direction:column;align-items:center}
.tools-grip{height:22px;display:flex;gap:6px;align-items:center;justify-content:center;flex:none}
.tools-grip i{width:4px;height:4px;border-radius:50%;background:#7a7a7a}
.tool{height:60px;width:56px;display:flex;align-items:center;justify-content:center;flex:none}
.tool.on{background:#151515;border-radius:6px;margin-bottom:0;height:56px;margin:0 0 2px}
.w38{width:38px;height:38px}.w40{width:38px;height:38px}.w40h{width:42px;height:30px}.w44{width:44px;height:28px}.w40p{width:40px;height:16px}

.viewport{width:2214px;flex:none;display:flex;flex-direction:column;overflow:hidden;background:#424242}
.t-vp{width:120px}
.tabs-vp{background:#232323}
.hruler{height:40px;flex:none;background:#474747;position:relative;z-index:2;color:#b8b8b8;font-size:20px}
.px{position:absolute;left:13px;top:7px;color:#c0c0c0}
.hlabels{display:flex;padding-left:22.400px;height:24px}
.hlabels span{width:105.200px;flex:none;text-align:center}
.hticks{height:16px;margin-left:54px;background:
 repeating-linear-gradient(90deg,transparent 0 21px,#a0a0a0 21px 22.500px,transparent 22.500px 105.200px),
 repeating-linear-gradient(90deg,#8f8f8f 0 1.500px,transparent 1.500px 21.040px) 0 100%/100% 7px no-repeat}
.stage{flex:1;min-height:0;display:flex;position:relative}
.vruler{width:40px;flex:none;background:#474747;position:relative;color:#b8b8b8;font-size:20px}
.vlabels{position:absolute;left:0;top:-52.600px;width:30px;z-index:3}
.vlabels span{display:flex;height:105.200px;align-items:center;justify-content:center;writing-mode:vertical-rl;transform:rotate(180deg);white-space:nowrap;width:30px}
.vticks{position:absolute;right:0;top:2px;bottom:0;width:16px;background:
 repeating-linear-gradient(180deg,#a0a0a0 0 1.500px,transparent 1.500px 105.200px),
 repeating-linear-gradient(180deg,#8f8f8f 0 1.500px,transparent 1.500px 21.040px) 100% 0/7px 100% no-repeat}
.canvas{flex:1;background:#000;position:relative;padding:64px 0 0 75px;isolation:isolate;overflow:hidden}
.comp{width:2024px;height:1139px;background:#fff;position:relative;overflow:hidden}
.kick{position:absolute;left:761px;top:148px;font:700 242px/1 Inter,Lato,sans-serif;letter-spacing:-11px;color:#6433f0;white-space:nowrap}
.clap{position:absolute;left:0;top:0;height:1139px;color:#468d63;font-family:Inter,Lato,sans-serif;font-feature-settings:"cv11";white-space:nowrap}
.clap span{position:absolute;line-height:1;display:block;transform-origin:0 50%}
.cl-c{font-size:745px;font-weight:500;left:196px;top:240px;transform:scaleX(.92)}
.cl-l{font-size:823px;font-weight:500;left:690px;top:172px}
.cl-a{font-size:620px;font-weight:600;left:887px;top:347px;transform:scaleX(1.09)}
.cl-p{font-size:620px;font-weight:600;left:1318px;top:347px;transform:scaleX(1.09)}
.clap::after{content:"";position:absolute;left:1363px;top:924px;width:87px;height:147px;background:#468d63}
.viz{position:absolute;left:0;top:0}
.gridlines{position:absolute;left:12.500px;top:-8.600px;right:0;bottom:0;background:
 repeating-linear-gradient(90deg,rgba(0,0,0,.28) 0 1.500px,transparent 1.500px 52.600px),
 repeating-linear-gradient(180deg,rgba(0,0,0,.22) 0 1.500px,transparent 1.500px 52.600px)}
.help{position:absolute;left:40px;top:1074px;font-size:24px;line-height:28px;color:#fff;mix-blend-mode:difference;white-space:nowrap}
.help em{color:#555}
.vpbar{height:44px;flex:none;background:#424242;display:flex;align-items:center;position:relative;z-index:2}
.zm{margin-left:12px;width:67px}
.zmsel{width:157px;height:32px;background:#2c2c2c;border-radius:4px;display:flex;align-items:center;justify-content:space-between;padding:0 7px 0 6px}
.bg-trans{margin-left:522px;width:198px;height:40px}
.bg-trans svg{width:36px;height:36px}
.ib38{width:38px;height:40px;background:#333;border:2px solid #1f1f1f;border-radius:8px;display:flex;align-items:center;justify-content:center;flex:none}
.ib38 svg{width:30px;height:30px}
.tr-out{margin-left:13px}
.vp-tag{margin-left:521px;width:74px;height:36px;background:#2e2e2e;border-radius:5px;display:flex;align-items:center;padding-left:2px;gap:18px;color:#aaa}
.vp-tag svg{width:28px;height:28px}
.vpg{width:63px;height:40px;display:flex;background:#2e2e2e;border:2px solid #1f1f1f;border-radius:8px;margin-left:7px;flex:none}
.vpg i{flex:1;display:flex;align-items:center;justify-content:center}
.vpg u{width:24px;display:flex;align-items:center;justify-content:center;border-left:2px solid #222}
.vpg i svg{width:30px;height:32px}
.vpg u svg{width:14px;height:24px}
.vpbar>.ib38{margin-left:7px}
.vpbar>.tr-out{margin-left:13px}
.vpbar>.lt{background:#444}

.scene{height:868px;flex:none;margin-top:12px;display:flex;flex-direction:column;background:#323232}
.tabs-sc{height:47px;background:#1f1f1f;border-bottom:2px solid #2fb864}
.tabs-sc .tab{height:45px}
.t-sw{width:178px}
.t-js{width:201px;background:#272727;margin-left:1px}
.comprow{height:41px;flex:none;background:#454545;text-align:center;line-height:41px;color:#ececec;padding-left:2px;margin-right:4px}
.split{flex:1;min-height:0;display:flex}
.lst-col{width:1174px;flex:none;display:flex;flex-direction:column}
.lsearch{height:47px;flex:none;background:#454545;display:flex;align-items:flex-start;padding:4px 0 0 6px}
.s-layer{width:795px;height:40px;padding-left:6px;gap:8px}
.ic-plus{margin-left:6px}
.lsearch .ib38{height:40px}
.lsearch .ib38+.ib38{margin-left:6px}
.lsearch .ib38+.ic-on{margin-left:50px}
.frame{margin-left:5px;width:188px;height:40px;background:#2c2c2c;border-radius:4px;display:flex;align-items:center;padding-left:8px;gap:16px}
.frame b{color:#666}
.lhead{height:37px;flex:none;background:#444;display:flex;align-items:center;padding-left:10px}
.hi{width:30px;height:34px;margin-right:8px}
.hi1{width:24px;margin-right:10px}
.nm{margin-left:77px;color:#e8e8e8}
.lwrap{height:628px;flex:none;display:flex;background:#323232;padding-bottom:0}
.lrows{width:1148px;flex:none}
.lr{height:44px;display:flex;align-items:center;padding-left:4px;background:#3d3d3d;color:#eee;position:relative}
.lr-sel{background:#3d3d3d linear-gradient(#484a5e,#484a5e) center/100% 40px no-repeat}
.cell{width:36px;height:36px;background:#282828;border-radius:5px;margin-right:2px;display:flex;align-items:center;justify-content:center;flex:none}
.cell.none{background:none}
.cell svg{width:26px;height:30px}
.sw{width:34px;height:36px;border-radius:6px;border:2px solid #151515;margin-left:1px;flex:none}
.sw-g{background:#c6c6c6}.sw-lime{background:#cdf07a}.sw-pur{background:#b48fff}.sw-blu{background:#8484ff}
.tag{width:28px;height:28px;margin-left:7px}
.ex{width:63px;height:36px;margin-left:6px;background:#373737;border-radius:4px;display:block;flex:none}
.ex i{display:flex;width:30px;height:36px;background:#3f3f3f;border-radius:4px;align-items:center;justify-content:center}
.ex svg{width:14px;height:24px}
.fo{width:28px;height:32px;margin-left:13px}
.ln{margin-left:10px;white-space:nowrap}
.ch{width:29px;height:36px;margin-left:122px}
.ln2{margin-left:7px}
.kfs{position:absolute;left:1067px;top:4px;width:40px;height:36px;background:#2e2e2e;border-radius:6px;display:flex;align-items:center;justify-content:center}
.kfs svg{width:36px;height:24px}
.kfs-on{box-shadow:inset 0 0 0 2px #786c44}
.lr .rr{position:absolute;left:1119px;top:13px;width:17px;height:18px;border-color:#737373}
.vsb{width:24px;margin-left:2px;flex:none;background:#2f2f2f}
.vsb i{display:block;height:624px;background:#474747;border-radius:12px;margin:0 2px}
.hsb{height:24px;flex:none;background:#323232;padding:0 2px}
.hsb i{display:block;height:20px;background:#4e4e4e;border-radius:10px}
.hsb-l{padding-right:31px}
.bbar{height:44px;flex:none;background:#424242;display:flex;align-items:center}
.bbar-l{padding-left:6px}
.bb-tag svg{width:28px;height:28px}
.sel1{margin-left:8px;width:702px;color:#eee}
.bb-toggle{width:368px;height:36px;margin-left:6px;padding:3px}
.tg-time{width:172px;padding-left:13px;gap:9px}
.tg-graph{padding-left:16px;gap:11px}
.divider{width:14px;flex:none;background:#2a2a2a}
.tl-col{width:1098px;flex:none;display:flex;flex-direction:column}
.tl-ruler{height:48px;flex:none;background:#2a2a2a;position:relative;font-size:23px;color:#dcdcdc;overflow:visible}
.tl-labels{display:flex;position:absolute;left:-36px;top:3px}
.tl-labels span{width:92.600px;text-align:center;flex:none}
.tl-labels span:first-child{transform:translateX(-4px)}
.tl-ticks{position:absolute;left:10px;right:0;bottom:0;height:15px;background:
 repeating-linear-gradient(90deg,#d8d8d8 0 1.500px,transparent 1.500px 92.600px),
 repeating-linear-gradient(90deg,#bdbdbd 0 1.500px,transparent 1.500px 18.520px) 0 100%/100% 7px no-repeat}
.playhead{position:absolute;left:432px;top:25px;border:14.500px solid transparent;border-top:19px solid #78c8ae;border-bottom:0;width:0;height:0}
.tl-range{height:36px;flex:none;background:#444;border-bottom:4px solid #3a3a3a;position:relative}
.tl-range i{position:absolute;top:-2px;bottom:-2px;width:10px;background:#78c8ae;border-radius:3px}
.h1{left:0}.h2{right:0}
.tl-range .phline{left:446px;width:1px;top:0;bottom:-4px;background:#6fb8a2;border-radius:0}
.tracks{height:627px;flex:none;position:relative;padding-top:0;background:
 repeating-linear-gradient(180deg,#2d2d2d 0 8px,transparent 8px 12px),
 repeating-linear-gradient(90deg,transparent 0 45.600px,#2f8fd0 45.600px 46.600px,transparent 46.600px 76.500px),
 repeating-linear-gradient(90deg,transparent 0 7.400px,#8a8a8a 7.400px 8.400px,transparent 8.400px 19.125px),#2d2d2d}
.trk{height:36px;margin:4px 0 8px;line-height:36px;padding-left:16px;color:#111;white-space:nowrap;position:relative}
.tk-g{background:#c0c0c0}
.tk-lime{background:repeating-linear-gradient(130deg,#b9d86e 0 24.500px,#cdf07a 24.500px 54px)}
.tk-pur{background:#b48fff;color:#fff}
.tk-snd{background:
 linear-gradient(#6666cc,#6666cc) 0 50%/100% 4px no-repeat,
 repeating-linear-gradient(90deg,transparent 0 3px,#5f5fbf 3px 5px,transparent 5px 9px) 658px 0/302px 100% no-repeat,
 radial-gradient(#6a6ad8 1px,transparent 1.500px) 0 0/5px 5px,#8080f0;
 border-top:3px solid #fff;border-bottom:3px solid #fff;line-height:30px;color:#f4f4f4}
.tl-line{position:absolute;left:339px;top:0;bottom:0;width:1px;background:rgba(130,190,170,.6)}
.hsb-r{margin-top:1px;padding:0 8px 0 6px;background:#323232;height:24px}
.bbar-r{padding-left:7px}
.ib34{width:35px;height:40px;background:#333;border:2px solid #1f1f1f;border-radius:8px;display:flex;align-items:center;justify-content:center;flex:none}
.ib34 svg{width:28px;height:32px}
.kl-field{margin-left:6px;width:300px;height:36px;background:#2a2a2a;border-radius:4px;padding-left:5px;line-height:36px;color:#f0f0f0;white-space:nowrap}
.al-lbl{margin-left:12px;width:73px;color:#efefef}
.bg-al{width:106px;height:40px}
.bg-al svg{width:30px;height:30px}
.ab{margin-left:8px}
.vpg-s{margin-left:8px;width:62px}
.zmi{width:30px;height:36px}
.zmo{margin-left:34px}
.zslider{margin-left:10px;width:239px;background:#454545}
.zslider .thumb{margin-top:-10px}
.zmp{margin-left:10px}
.status{height:44px;flex:none;margin-top:12px;background:#3a3a3a;display:flex;align-items:center;padding-left:4px}
.grip3{width:6px;height:30px;margin-left:2px}
.st-con{margin-left:13px;width:34px;height:36px}
.st-zero{margin-left:7px;width:36px;height:28px;background:#555;border-radius:4px;color:#000;text-align:center;line-height:28px}
.st-dot{margin-left:16px;width:12px;height:14px;border-radius:50%;background:#2fc46e}
.st-msg{margin-left:10px;width:1750px;color:#d8d8d8;white-space:nowrap;font-size:23.500px}
.pill{height:36px;border-radius:5px;display:flex;align-items:center;color:#1a1a1a;padding-left:11px;justify-content:space-between;padding-right:8px;flex:none}
.pill svg{width:28px;height:34px}
.pill-fb{width:164px;background:#cbb870}
.pill-tip{width:218px;margin-left:5px;background:#3daef0}
```
